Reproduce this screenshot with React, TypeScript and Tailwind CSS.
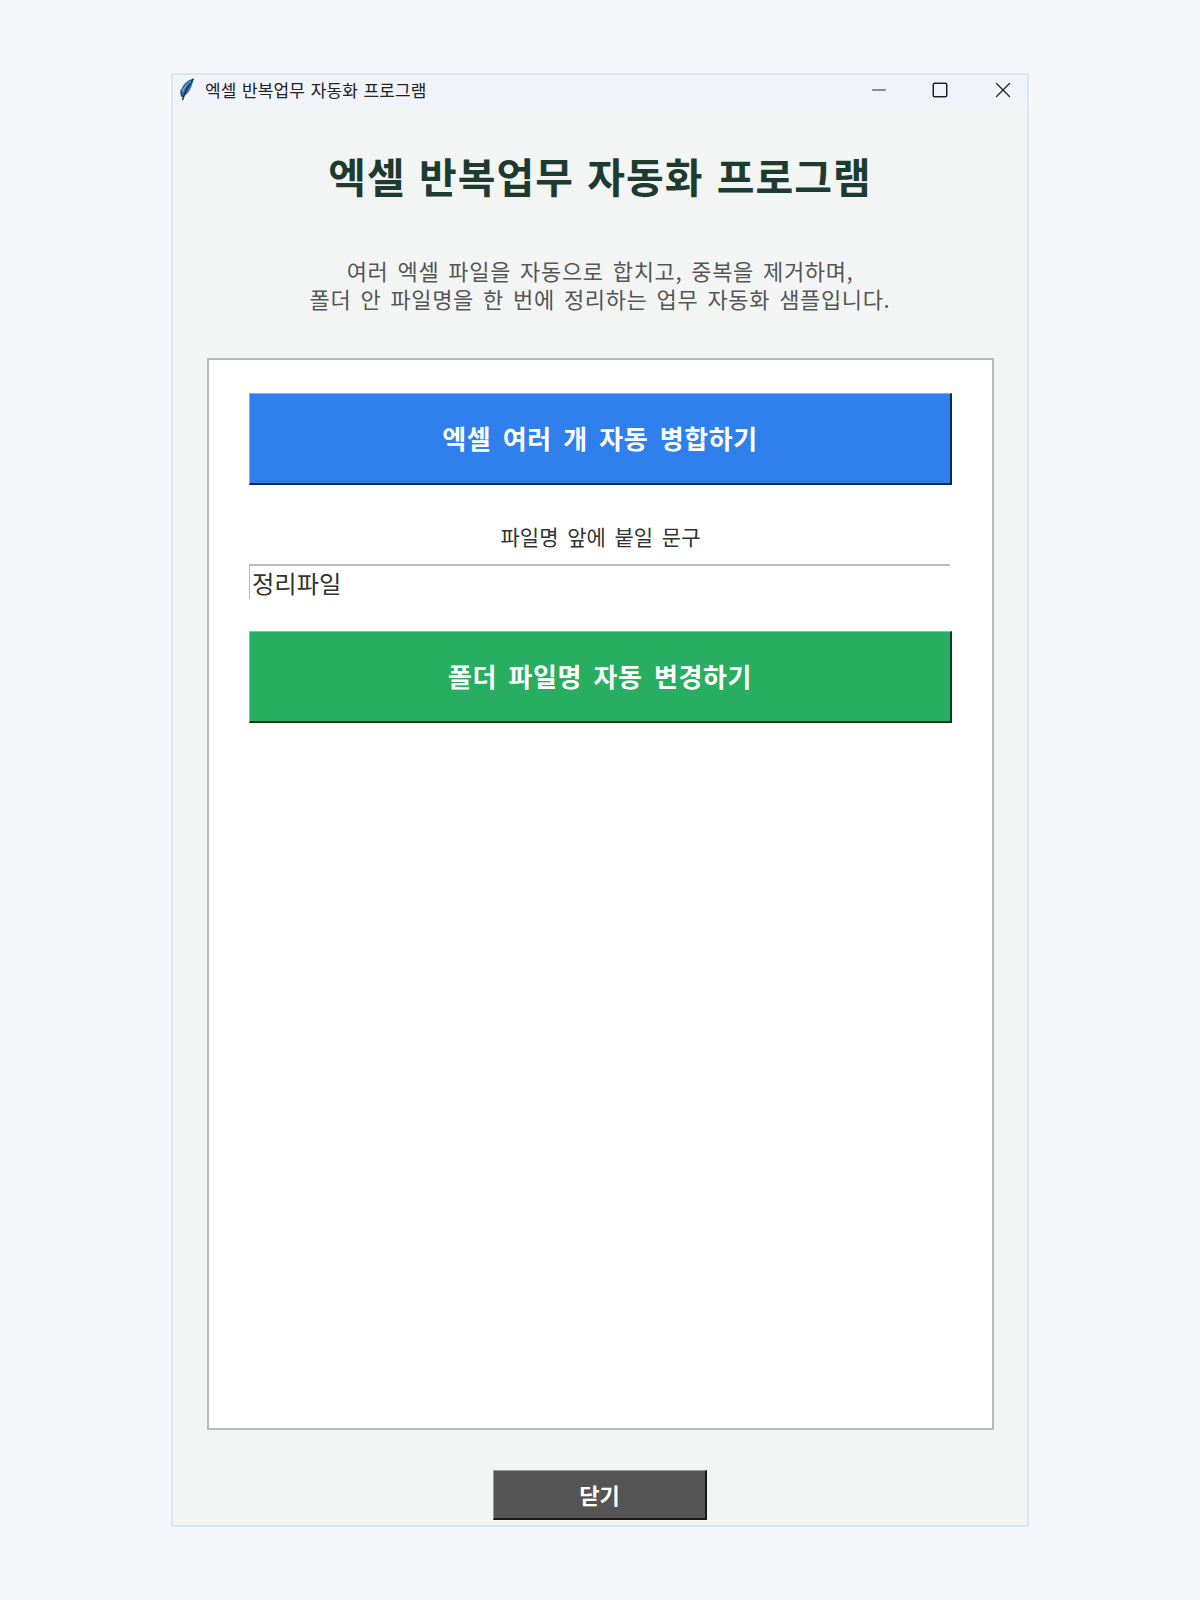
import { Minus, Square, X } from "lucide-react";

const font = { fontFamily: '"Noto Sans CJK KR", "Liberation Sans", sans-serif' };

function FeatherIcon() {
  return (
    <svg width="16" height="24" viewBox="0 0 16 24" className="shrink-0">
      <path d="M14.5 .8C9 1.5 3 6.5 2 13.5c-.3 2.2 0 4.2 1.2 5.5 6-2 10.300-10 11.300-18.200z" fill="#2f6fb0" />
      <path d="M14.500 .8C11 5 7 11 3.500 22" stroke="#24303d" strokeWidth="1.500" fill="none" />
      <path d="M12 3.500C8.500 5.500 5 9 3.500 14" stroke="#8db8de" strokeWidth="1" fill="none" />
      <path d="M2.300 11.500c-.5 2.500-.4 5.500 1 7.500" stroke="#2a3a4c" strokeWidth="1.200" fill="none" />
    </svg>
  );
}

function BigButton({ label, className }: { label: string; className: string }) {
  return (
    <button
      className={`flex h-[92px] w-full items-center justify-center border-t border-l border-b-2 border-r-2 pb-[2px] text-[26px] font-bold tracking-[0.6px] [word-spacing:5px] text-white ${className}`}
    >
      {label}
    </button>
  );
}

export default function App() {
  return (
    <div className="min-h-[1600px] bg-[#f5f7fb] pt-[73px]" style={font}>
      <div className="mx-auto flex h-[1454px] w-[858px] flex-col border-2 border-[#dbe5f1] bg-[#f3f5f5]">
        {/* Title bar */}
        <div className="flex h-[34px] items-center bg-[#f0f4f9] pb-[4px] pl-[6px]">
          <FeatherIcon />
          <span className="ml-[10px] text-[17px] tracking-[0.1px] [word-spacing:1.7px] text-[#222]">
            엑셀 반복업무 자동화 프로그램
          </span>
          <div className="ml-auto flex items-center text-[#222]">
            <Minus className="h-[22px] w-[22px]" strokeWidth={1.3} />
            <Square className="ml-[41px] h-[18px] w-[18px]" strokeWidth={2} />
            <X className="ml-[41px] mr-[11px] h-[26px] w-[26px]" strokeWidth={1.2} />
          </div>
        </div>

        {/* Heading */}
        <h1 className="mt-[38px] text-center text-[41px] font-bold leading-[56px] tracking-[1px] [word-spacing:3px] text-[#1d3b2f]">
          엑셀 반복업무 자동화 프로그램
        </h1>
        <p className="mt-[53px] text-center text-[22px] leading-[28px] tracking-[0.65px] [word-spacing:3.5px] text-[#555]">
          여러 엑셀 파일을 자동으로 합치고, 중복을 제거하며,
          <br />
          폴더 안 파일명을 한 번에 정리하는 업무 자동화 샘플입니다.
        </p>

        {/* Panel */}
        <div className="ml-[34px] mr-[33px] mt-[46px] flex h-[1072px] flex-col border-2 border-[#b9bbbb] bg-white pl-[40px] pr-[40px] pt-[33px]">
          <BigButton
            label="엑셀 여러 개 자동 병합하기"
            className="border-t-[#7fb2f5] border-l-[#7fb2f5] border-b-[#12294f] border-r-[#12294f] bg-[#2f80ed]"
          />
          <div className="mt-[36px] text-center text-[21px] leading-[30px] [word-spacing:4px] text-[#333]">
            파일명 앞에 붙일 문구
          </div>
          <div className="mt-[13px] flex h-[35px] w-[701px] items-center border-t-2 border-l border-[#bdbdbd] pl-[2px] pt-[1px] text-[24.300px] text-[#333]">
            정리파일
          </div>
          <div className="mt-[32px]">
            <BigButton
              label="폴더 파일명 자동 변경하기"
              className="border-t-[#6fd097] border-l-[#6fd097] border-b-[#0e3b22] border-r-[#0e3b22] bg-[#27ae60]"
            />
          </div>
        </div>

        {/* Footer */}
        <div className="mt-[40px] flex justify-center">
          <button className="flex h-[50px] w-[214px] items-center justify-center border-t border-l border-b-2 border-r-2 border-t-[#999] border-l-[#999] border-b-[#1a1a1a] border-r-[#1a1a1a] bg-[#555] text-[22px] font-bold text-white">
            닫기
          </button>
        </div>
      </div>
    </div>
  );
}
